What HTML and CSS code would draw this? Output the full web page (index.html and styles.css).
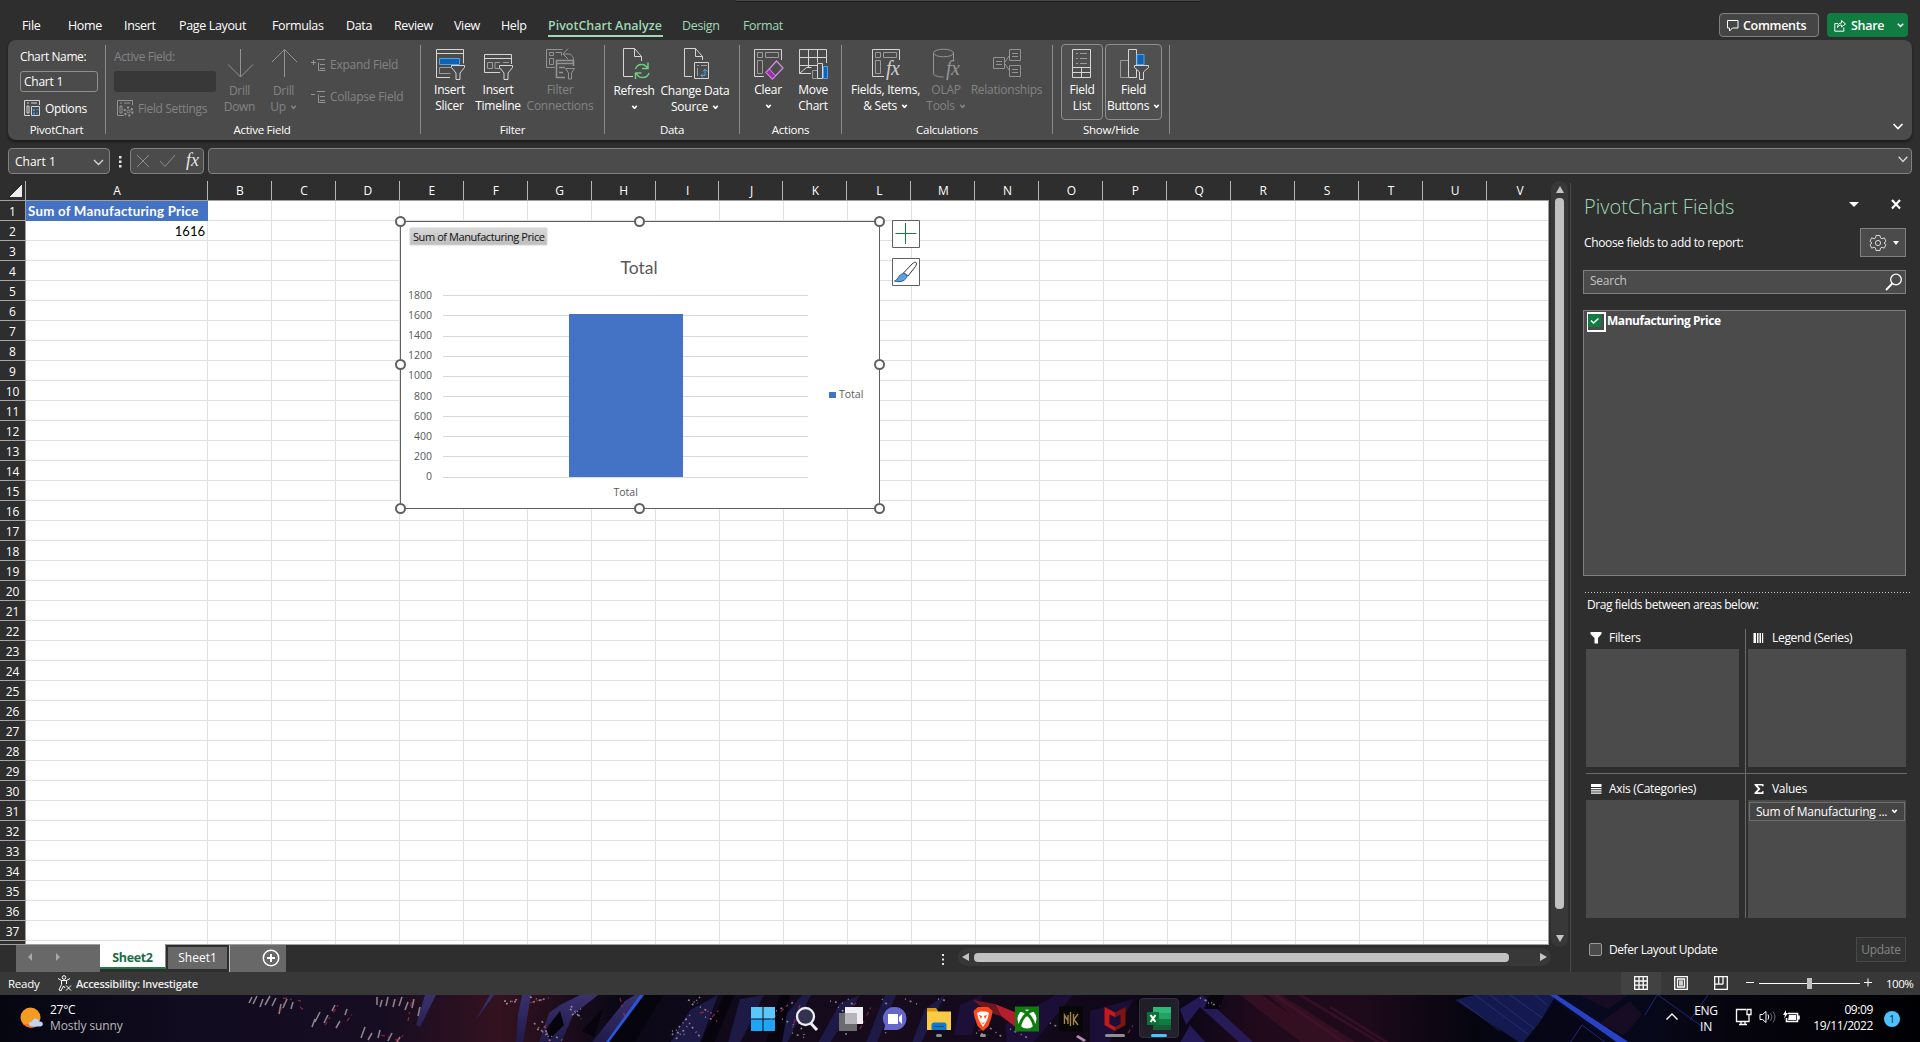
FILE: index.html
```html
<!DOCTYPE html>
<html lang="en">
<head>
<meta charset="utf-8">
<title>PivotChart</title>
<link rel="stylesheet" href="styles.css">
</head>
<body>
<div class="app">
  <header class="tabs-bar">
    <div class="title-search"></div>
    <nav class="ribbon-tabs">
      <span>File</span><span>Home</span><span>Insert</span><span>Page Layout</span><span>Formulas</span><span>Data</span><span>Review</span><span>View</span><span>Help</span><span class="green active"><b>PivotChart Analyze</b></span><span class="green">Design</span><span class="green">Format</span>
    </nav>
    <div class="top-actions">
      <div class="comments"><svg width="12" height="12" viewBox="0 0 12 12"><path d="M.5.5h10.500v7.500H5.500L2.500 11V8H.5z"/></svg><span>Comments</span></div>
      <div class="share"><svg width="12" height="13" viewBox="0 0 12 13"><path d="M4 4.500H.8v7.700h9V8.500M3.500 8.500c0-3 1.500-4.500 4-4.500V1.500L11.500 5 7.500 8V6c-2 0-3 .8-4 2.500z"/></svg><span>Share</span><svg class="sh-caret" width="7" height="5" viewBox="0 0 7 5"><path d="M.8.8l2.700 2.700L6.200.8" stroke-width="1.500"/></svg></div>
    </div>
  </header>

  <section class="ribbon">
    <div class="group g1">
      <div class="body stack">
        <span class="ln">Chart Name:</span>
        <div class="name-input">Chart 1</div>
        <div class="small-btn opt"><svg width="17" height="17" viewBox="0 0 17 17"><path d="M15.500 5V.5H.5v15H6M3 3h2M7 3h6M3 6v7M5 6v7M3 6h2M3 13h2"/><path d="M7.500 6.500h8v9h-8z"/><path d="M9 9h2v2H9zM12.500 9h2v1h-2zM9 12.500h2v2H9zM12.500 12.500h1v2h-1z" class="blue"/></svg><span>Options</span></div>
      </div>
      <div class="cap">PivotChart</div>
    </div>
    <div class="group g2">
      <div class="body row dim">
        <div class="stack af">
          <span class="ln">Active Field:</span>
          <div class="dark-input"></div>
          <div class="small-btn"><svg width="17" height="17" viewBox="0 0 17 17"><path d="M15.500 5V.5H.5v15H7M3 3h2M7 3h6M3 6v7M5 6v7M3 6h2M3 13h2"/><circle cx="11.500" cy="11.500" r="1.500"/><circle cx="11.500" cy="11.500" r="4" stroke-width="2" stroke-dasharray="2.200 2"/></svg><span>Field Settings</span></div>
        </div>
        <div class="big w44"><svg width="28" height="32" viewBox="0 0 28 32"><path d="M14.500 1v28M2 16.500l12.500 12.500L27 16.500"/></svg><span>Drill</span><span>Down</span></div>
        <div class="big w44"><svg width="28" height="32" viewBox="0 0 28 32"><path d="M14.500 29V1.500M2 14L14.500 1.500 27 14"/></svg><span>Drill</span><span>Up <i class="cv"></i></span></div>
        <div class="stack ec">
          <div><svg width="15" height="14" viewBox="0 0 15 14"><path d="M0 4.500h5M2.500 2v5M6 1.500h8M9 6.500h5M9 10.500h5M7.500 4.500v8h7"/></svg><span>Expand Field</span></div>
          <div><svg width="15" height="14" viewBox="0 0 15 14"><path d="M0 4.500h4M6 1.500h8M9 6.500h5M9 10.500h5M7.500 4.500v8h7"/></svg><span>Collapse Field</span></div>
        </div>
      </div>
      <div class="cap">Active Field</div>
    </div>
    <div class="group g3">
      <div class="body row">
        <div class="big w46"><svg width="30" height="32" viewBox="0 0 30 32"><path d="M15 29.500H1.500v-28h27v14M1.500 5.500h27"/><path d="M4.500 10.500h20v6h-20z" class="bluebox"/><path d="M16 19.500H4.500v6h11" class="gy"/><path d="M16.500 17.500h13v2L25 25v6.500h-4V25l-4.500-5.500z" class="fillbg"/></svg><span>Insert</span><span>Slicer</span></div>
        <div class="big w51"><svg width="30" height="32" viewBox="0 0 30 32"><path d="M17 24.500H1.500v-18h27V16M1.500 10.500h27"/><path d="M4.500 14.500h5v6h-5zM12 14.500h5M12 14.500v6h5M20 14.500h6" class="gy"/><path d="M16.500 17.500h13v2L25 25v6.500h-4V25l-4.500-5.500z" class="fillbg"/></svg><span>Insert</span><span>Timeline</span></div>
        <div class="big w73 dim"><svg width="30" height="32" viewBox="0 0 30 32"><path d="M10 19.500H1.500v-18h16M4.500 4.500h4v3h-4zM10.500 4.500h6v3M4.500 10.500h4v6h-4zM19 6h5c4 1 5.500 5 4 9M23 .5L18 6l5 5"/><path d="M20 29.500h-8.500v-17h17V18M11.500 15.500h17M14 19.500h6M14 24.500h4" stroke-width="1.600"/><path d="M20.500 20.500h9L26.500 25v6h-3v-6z" class="fillbg"/></svg><span>Filter</span><span>Connections</span></div>
      </div>
      <div class="cap">Filter</div>
    </div>
    <div class="group g4">
      <div class="body row">
        <div class="big w46 dn"><svg width="28" height="32" viewBox="0 0 28 32"><path d="M13 28.500H3.500V.5h11l7 8V13M14.500.5v8h7"/><path class="grn" d="M15.500 21c2-6 10-6 12-.5M28 14.500v6h-6M29 25c-2 6-10 6-12.500.5M15.500 31v-6h6"/></svg><span>Refresh</span><span><i class="cv"></i></span></div>
        <div class="big w76 dn"><svg width="28" height="32" viewBox="0 0 28 32"><path d="M11 28.500H3.500V.5h11l7 8V12M14.500.5v8h7"/><path d="M13.500 14.500h14v16h-14z"/><path d="M16 17.500h2M20 17.500h6M16.500 20v8" class="gy"/><path class="bl" d="M20 27.500h4v-6M22 23.500l2-2.500 2.500 2.500M22 25.500l-2 2 2 2"/></svg><span>Change Data</span><span>Source <i class="cv"></i></span></div>
      </div>
      <div class="cap">Data</div>
    </div>
    <div class="group g5">
      <div class="body row">
        <div class="big w45"><svg width="30" height="32" viewBox="0 0 30 32"><path d="M11 28.500H1.500V1.500h27V12"/><path class="gy" d="M4.500 4.500h5v5h-5zM12.500 4.500h13v5h-13zM4.500 12.500h5v13h-5z"/><path class="pu" d="M13 24.500L23.500 13l6.500 7-10.500 11z"/><path class="puf" d="M13 24.500l3.500-3.500 6 7-3 3z"/></svg><span>Clear</span><span><i class="cv"></i></span></div>
        <div class="big w45"><svg width="31" height="32" viewBox="0 0 31 32"><path d="M13 25.500H1.500V1.500h27V15M1.500 9.500h27M1.500 17.500h18M10.500 1.500v18M19.500 1.500v13M1.500 25.500l7-6h5"/><path class="gy" d="M14.500 22.500h5v8h-5z"/><path d="M19.500 15.500h5v15h-5z" class="fillbg"/><path d="M25.500 18.500h4v12h-4z" class="bluebox"/></svg><span>Move</span><span>Chart</span></div>
      </div>
      <div class="cap">Actions</div>
    </div>
    <div class="group g6">
      <div class="body row">
        <div class="big w74"><svg width="30" height="32" viewBox="0 0 30 32"><path d="M13 28.500H1.500V1.500h27V12"/><path class="gy" d="M4.500 4.500h5v5h-5zM12.500 4.500h13v5h-13zM4.500 12.500h5v13h-5z"/><text x="15" y="27" class="fx">fx</text></svg><span>Fields, Items,</span><span>&amp; Sets <i class="cv"></i></span></div>
        <div class="big w47 dim"><svg width="28" height="32" viewBox="0 0 28 32"><ellipse cx="11.500" cy="5" rx="10" ry="3.800"/><path d="M1.500 5v21c1 2 5 3 10 3M21.500 5v8"/><text x="14" y="27" class="fx">fx</text></svg><span>OLAP</span><span>Tools <i class="cv"></i></span></div>
        <div class="big w74 dim"><svg width="30" height="32" viewBox="0 0 30 32"><path d="M1.500 9.500h11v11h-11zM17.500 1.500h11v11h-11zM17.500 17.500h11v11h-11zM4 13.500h6M4 16.500h6M20 5.500h6M20 8.500h6M20 21.500h6M20 24.500h6M13 14l4-6M13 16l4 6"/></svg><span>Relationships</span></div>
      </div>
      <div class="cap">Calculations</div>
    </div>
    <div class="group g7">
      <div class="body row">
        <div class="big toggled w42"><svg width="22" height="32" viewBox="0 0 22 32"><path d="M1.500 1.500h18v28h-18zM1.500 19.500h18M1.500 24.500h18M10.500 19.500v10"/><path class="gy" d="M5 5.500h2M9 5.500h7M5 10.500h2M9 10.500h7M5 15.500h2M9 15.500h7"/></svg><span>Field</span><span>List</span></div>
        <div class="big toggled w57"><svg width="30" height="32" viewBox="0 0 30 32"><path class="gy" d="M9 12.500H1.500v17H9"/><path d="M9.500 1.500h8v28h-8z"/><path class="bluebox" d="M18 6.500h7v10h-7z"/><path d="M15.500 17.500h14v2L24.500 24v7.500h-4V24l-5-4.500z" class="fillbg"/></svg><span>Field</span><span>Buttons <i class="cv"></i></span></div>
      </div>
      <div class="cap">Show/Hide</div>
    </div>
    <svg class="collapse" width="12" height="8" viewBox="0 0 12 8"><path d="M1.500 1l4.500 4.500L10.500 1" stroke-width="1.600"/></svg>
  </section>

  <section class="formula-row">
    <div class="name-box"><span>Chart 1</span><svg width="11" height="7" viewBox="0 0 11 7"><path d="M1 1l4.500 4.500L10 1" stroke-width="1.300"/></svg></div>
    <svg class="dots" width="3" height="12" viewBox="0 0 3 12"><path d="M0 0h2.500v2.500H0zM0 4.500h2.500V7H0zM0 9h2.500v2.500H0z"/></svg>
    <div class="fx-box"><svg width="14" height="14" viewBox="0 0 14 14"><path d="M1 1l12 12M13 1L1 13"/></svg><svg width="17" height="14" viewBox="0 0 17 14"><path d="M1 7l5 5.500L16 1"/></svg><em>fx</em></div>
    <div class="formula-box"><svg width="10" height="7" viewBox="0 0 10 7"><path d="M.7.7L5 5.500 9.300.7" stroke-width="1.400"/></svg></div>
  </section>

  <main class="work">
    <div class="sheet-area">
      <div class="sheet-row">
        <div class="sheet">
          <div class="col-heads"><i class="corner"></i><span class="a">A</span><span>B</span><span>C</span><span>D</span><span>E</span><span>F</span><span>G</span><span>H</span><span>I</span><span>J</span><span>K</span><span>L</span><span>M</span><span>N</span><span>O</span><span>P</span><span>Q</span><span>R</span><span>S</span><span>T</span><span>U</span><span class="last">V</span></div>
          <div class="rows">
            <div class="row-heads"><span>1</span><span>2</span><span>3</span><span>4</span><span>5</span><span>6</span><span>7</span><span>8</span><span>9</span><span>10</span><span>11</span><span>12</span><span>13</span><span>14</span><span>15</span><span>16</span><span>17</span><span>18</span><span>19</span><span>20</span><span>21</span><span>22</span><span>23</span><span>24</span><span>25</span><span>26</span><span>27</span><span>28</span><span>29</span><span>30</span><span>31</span><span>32</span><span>33</span><span>34</span><span>35</span><span>36</span><span>37</span></div>
            <div class="cells">
              <div class="cell head">Sum of Manufacturing Price</div>
              <div class="cell num">1616</div>
              <div class="chart">
                <svg width="494" height="302" viewBox="393 214 494 302">
                  <defs><linearGradient id="fb" x2="0" y2="1"><stop offset="0" stop-color="#d9d9d9"/><stop offset="1" stop-color="#bdbdbd"/></linearGradient></defs>
                  <path d="M400.500 221.500h479v287h-479z" fill="#fff" stroke="#606060"/>
                  <path d="M410 228h137v17H410z" fill="url(#fb)"/>
                  <text x="413" y="241" class="fbtn">Sum of Manufacturing Price</text>
                  <text x="639" y="274" class="ct">Total</text>
                  <path stroke="#d9d9d9" d="M443 295.500h365M443 315.500h365M443 336.500h365M443 356.500h365M443 376.500h365M443 396.500h365M443 416.500h365M443 436.500h365M443 456.500h365M443 477.500h365"/>
                  <path d="M569 314h114v163H569z" fill="#4472c4" stroke="none"/>
                  <g class="ax"><text x="432" y="299">1800</text><text x="432" y="319">1600</text><text x="432" y="339">1400</text><text x="432" y="359">1200</text><text x="432" y="379">1000</text><text x="432" y="400">800</text><text x="432" y="420">600</text><text x="432" y="440">400</text><text x="432" y="460">200</text><text x="432" y="480">0</text></g>
                  <text x="613.500" y="496" class="lb">Total</text>
                  <path d="M829 392h7v6h-7z" fill="#4472c4" stroke="none"/><text x="839" y="398" class="lb">Total</text>
                  <g fill="#fff" stroke="#606060" stroke-width="2"><circle cx="400.500" cy="221.500" r="4.500"/><circle cx="639.500" cy="221.500" r="4.500"/><circle cx="879.500" cy="221.500" r="4.500"/><circle cx="400.500" cy="364.500" r="4.500"/><circle cx="879.500" cy="364.500" r="4.500"/><circle cx="400.500" cy="508.500" r="4.500"/><circle cx="639.500" cy="508.500" r="4.500"/><circle cx="879.500" cy="508.500" r="4.500"/></g>
                </svg>
                <div class="side-btns">
                  <svg width="28" height="28" viewBox="0 0 28 28"><path d="M.5.5h27v27H.5z" fill="#fff" stroke="#606060"/><path d="M3.500 13.500h21M13.500 3v21" stroke="#1e7b3c" fill="none"/></svg>
                  <svg width="28" height="28" viewBox="0 0 28 28"><path d="M.5.5h27v27H.5z" fill="#fff" stroke="#606060"/><path d="M24 4.500c1 .5.5 2-.5 4L16 18l-4.500-3L20 6c2-1.500 3-2.200 4-1.500z" fill="#fff" stroke="#333"/><path d="M11.500 15.500c3 0 4 2 3 4-2 4-7 5-12 3.500 4-1 3.500-6.500 9-7.500z" fill="#5ba3dc" stroke="#2b579a"/></svg>
                </div>
              </div>
            </div>
          </div>
        </div>
        <div class="vscroll"><i class="up"></i><i class="thumb"></i><i class="down"></i></div>
      </div>
      <div class="sheet-tabs">
        <div class="nav"><i class="la"></i><i class="ra"></i></div>
        <div class="tab on">Sheet2</div>
        <div class="tab off">Sheet1</div>
        <div class="add"><svg width="18" height="18" viewBox="0 0 18 18"><circle cx="9" cy="9" r="7.700"/><path d="M9 5v8M5 9h8" stroke-width="2"/></svg></div>
        <svg class="dots hs" width="3" height="12" viewBox="0 0 3 12"><path d="M0 0h2v2H0zM0 4.500h2v2H0zM0 9h2v2H0z"/></svg>
        <div class="hscroll"><i class="la"></i><i class="thumb"></i><i class="ra"></i></div>
      </div>
    </div>

    <aside class="pane">
      <div class="pane-title"><h2>PivotChart Fields</h2><i class="tri"></i><svg width="11" height="11" viewBox="0 0 11 11"><path d="M1 1l8 8.500M9 1L1 9.500" stroke="#fff" stroke-width="2.200"/></svg></div>
      <div class="choose"><span>Choose fields to add to report:</span><div class="gear"><svg width="18" height="18" viewBox="0 0 18 18"><path d="M7 1.500h4l.5 2.500 1.500.8 2.300-1 1.700 3.500-2 1.700 2 1.700-1.700 3.500-2.300-1-1.500.8-.5 2.500H7L6.500 14 5 13.200l-2.300 1L1 10.700 3 9 1 7.300l1.700-3.500 2.300 1L6.500 4z"/><circle cx="9" cy="9" r="2.600"/></svg><i class="tri sm"></i></div></div>
      <div class="search"><span>Search</span><svg width="18" height="18" viewBox="0 0 18 18"><circle cx="12" cy="6.500" r="5.300"/><path d="M8.300 10.500L2 17" stroke-width="1.800"/></svg></div>
      <div class="fields"><i class="chk"><svg width="13" height="13" viewBox="0 0 13 13"><path d="M3 6.500l2.500 2.500 5-4.500" stroke="#fff" stroke-width="1.500" fill="none"/></svg></i><b>Manufacturing Price</b></div>
      <div class="dotline"></div>
      <div class="drag">Drag fields between areas below:</div>
      <div class="areas">
        <div class="area"><h3><svg width="12" height="12" viewBox="0 0 12 12"><path d="M.5 0h11v2L8 6v5.500H4.500V6L.5 2z"/></svg>Filters</h3><div class="drop"></div></div>
        <div class="area r"><h3><svg width="12" height="12" viewBox="0 0 12 12"><path d="M.5 1h2.500v10H.5zM4 1h1.500v10H4zM6.500 1H8v10H6.500zM9 1h1.200v10H9z"/></svg>Legend (Series)</h3><div class="drop"></div></div>
        <div class="area b"><h3><svg width="12" height="12" viewBox="0 0 12 12"><path d="M1 1h10.500v3H1zM1 5h10.500v1.200H1zM1 7.300h10.500v1.200H1zM1 9.500h10.500v1.200H1z"/></svg>Axis (Categories)</h3><div class="drop"></div></div>
        <div class="area r b"><h3><svg width="12" height="12" viewBox="0 0 12 12"><path d="M1.500 1h9v2.500h-1L9 2.500H4.500L7.500 6l-3.200 3.300H9l.5-1.300h1v3h-9V9.700L5 6 1.500 2z"/></svg>Values</h3><div class="drop"><div class="item"><span>Sum of Manufacturing ...</span><i class="cv"></i></div></div></div>
      </div>
      <div class="defer"><i></i><span>Defer Layout Update</span><div class="update">Update</div></div>
    </aside>
  </main>

  <footer class="status">
    <span class="ready">Ready</span>
    <svg class="acc" width="15" height="17" viewBox="0 0 15 17"><circle cx="7" cy="2.500" r="1.800"/><path d="M1 3.500l3.500 2v4L2 15l2 .8L6.500 11 8 13M13 3.500L9.500 5.500V9M4.500 5.500h5M9 10.500l5 5M14 10.500l-5 5"/></svg>
    <span class="acct">Accessibility: Investigate</span>
    <div class="views">
      <i class="v on"><svg width="14" height="14" viewBox="0 0 14 14"><path d="M.7.700h12.600v12.600H.7zM.7 5h12.600M.7 9.200h12.600M5 .7v12.600M9.200.7v12.600" stroke-width="1.300"/></svg></i>
      <i class="v"><svg width="14" height="14" viewBox="0 0 14 14"><path d="M.7.700h12.600v12.600H.7zM3.500 3h7v8h-7zM5 5.200h4M5 7h4M5 8.800h4" stroke-width="1.300"/></svg></i>
      <i class="v"><svg width="14" height="14" viewBox="0 0 14 14"><path d="M.7.700h12.600v12.600H.7zM4.700.7v7.500M9 .7v7.500M.7 8.200H9" stroke-width="1.300"/></svg></i>
    </div>
    <svg class="zoomer" width="128" height="12" viewBox="0 0 128 12"><path d="M1 5.500h8M14 6.500h101M119 5.500h8M123 1.500v8"/><path d="M62 1h5v11h-5z" fill="#c0c0c0" stroke="none"/></svg>
    <span class="pct">100%</span>
  </footer>

  <footer class="taskbar">
    <svg class="wall" width="1920" height="47" viewBox="0 0 1920 47">
      <defs>
        <linearGradient id="w1"><stop offset="0" stop-color="#060611"/><stop offset=".1" stop-color="#110c20"/><stop offset=".2" stop-color="#170d22"/><stop offset=".26" stop-color="#34121f"/><stop offset=".32" stop-color="#0b0818"/><stop offset=".46" stop-color="#170b1c"/><stop offset=".62" stop-color="#0d0718"/><stop offset=".655" stop-color="#200a1c"/><stop offset=".71" stop-color="#1e0a1a"/><stop offset=".77" stop-color="#04050f"/><stop offset=".82" stop-color="#070a22"/><stop offset=".9" stop-color="#06050f"/><stop offset="1" stop-color="#000003"/></linearGradient>
        <linearGradient id="w2" x2="0" y2="1"><stop offset="0" stop-color="#39306e"/><stop offset="1" stop-color="#201b49"/></linearGradient>
      </defs>
      <path fill="url(#w1)" d="M0 0h1920v48H0z"/>
      <path fill="url(#w2)" d="M425 0h11L420 32l-4-2zM490 0h4L475 26zM522 0h9l-8 48h-7l2-28zM560 10l20-10h18l-25 20-12 28h-22l10-30zM625 6l10-6h6l-34 47h-15zM684 36l16-18-6 26z"/>
      <path fill="#1d1a45" d="M690 15l28-15-18 48h-30zM740 4l24-4-24 48h-12zM786 20l16-20h9l-24 48h-16zM840 8l20-8-30 48h-12zM885 0h11l-19 48h-11zM925 14l20-14-24 48h-9z"/>
      <path fill="#211345" opacity=".7" d="M960 10l22-10-10 40h-18zM1005 30l50-30h18l-40 48h-26zM1090 16l44-12-25 44h-19z"/>
      <path fill="#2b1f66" opacity=".8" d="M1180 14l22-14 52 48h-14l-40-36-14 18zM1190 30l16 18h-26z"/>
      <path fill="#07040e" d="M700 48l24-48h10l-20 48zM766 48l14-48h10l-8 48zM546 34l14-18 4 14-14 14zM582 36l22-24-10 30zM1136 6l40-4-30 40zM1210 0h14l-4 14h-16z"/>
      <path fill="#2b55d8" d="M640 0h4L609 47h-3z"/>
      <path fill="#06040c" d="M645 0h18l-28 47h-25z"/>
      <path fill="#3d1225" d="M1240 0h22l70 48h-30zM1268 0h14l75 48h-34z" opacity=".65"/>
      <path stroke="#4b1731" opacity=".45" stroke-width="3" d="M1275 0l70 48M1300 0l80 48M1330 12l58 36"/>
      <path fill="#141a50" d="M1455 5l19-5h82l-28 47h-9z"/>
      <path stroke="#33499e" opacity=".45" d="M1475 0l54 40M1490 0l45 34M1510 0l34 24M1535 0l12 10M1460 6l40 30"/>
      <path fill="#060616" d="M1556 7l52 41h-85z"/>
      <path fill="#2941c4" d="M1550 0h7l73 48h-12z"/>
      <path stroke="#20277a" fill="none" d="M1570 48l12-18 24 18M1645 20l12-20M1658 0l45 32M1690 25l18-25"/>
      <path fill="#2a0f2c" opacity=".5" d="M1580 0h48l-20 14zM1600 28l30-22 12 14-18 20z"/>
      <g class="lights">
        <path d="M252 2l-3 6M257 1l-4 8M263 4l-3 8M270 1l-5 9M276 3l-4 8M281 9l-2 10M287 4l-4 9M293 7l-2 7M315 24l-3 8M320 17l-5 10M328 20l-4 8M335 10l-3 6M340 26l-4 7M347 14l-2 6M377 2v8M382 5l-2 7M388 2l-2 9M395 4l-2 8M402 2l-3 9M408 7l-3 8M414 4l-2 9M420 12l-2 9M365 32l-4 11M372 38l-4 7M380 35l-2 8M392 38l-4 8M400 42l-3 5"/>
        <path stroke-dasharray="2 4 1 3" d="M504 6l15 1M506 9l12-5M530 2l14 4M533 7l16-4M570 14l11 8M572 20l9-6M571 11l10 13M534 28l14 14M537 34l16 8M542 26l8 20M556 42l8 4M672 40l18-20M676 44l14-16M688 5l10 3M692 10l8-8M692 32l8 10"/>
        <path stroke-dasharray="1 4 2 5" d="M700 12l15 8M705 22l12 4M672 36l14 4M776 16l20-10M782 24l12 6M792 38l16 6M799 28l6 14M830 6l16 3M838 12l10 8M848 4l10 12M856 24l-12 18M882 4l9 10M890 26l-6 16M905 4l12 5M938 4l10 2M976 38l12 2M986 30l16 12M1010 34l18 9M1050 28l8 4M1200 3l12 5M1208 8l12 3"/>
      </g>
      <path stroke="#b33042" opacity=".7" stroke-width="1.300" stroke-dasharray="4 3 2 6" d="M283 3l18 3M280 16l7-14M300 12l5 4M325 30l13-20M347 26l5-6M381 40l20 6M408 26l4-22M396 46l8-6M530 8l12-4M545 30l4 16M620 3l5 20M700 18l14-3M712 22l8-8M758 36l29-25M800 10l-8 24M842 20l14-12M860 34l12-24M902 32l6-14M978 36l12-6M1128 38l8-12"/>
      <path fill="#b3202c" d="M995 9l22 9v15l-16-12z"/><path fill="#701822" d="M973 5l22 4 6 12-14-4z"/><path fill="#b78bae" d="M1078 40l8 5-2 2-8-5z"/>
    </svg>
    <div class="weather"><svg width="24" height="24" viewBox="0 0 24 24"><circle cx="10.500" cy="10.500" r="10" fill="#f59a23"/><path d="M4 17c4 5 12 5 15 0z" fill="#f0701a"/><path d="M12 19.500c-4 0-4-5 0-5 1-4 6-4 7 0 5-.5 5 5 1 5z" fill="#bcd4f5"/></svg><div><span>27°C</span><span class="sub">Mostly sunny</span></div></div>
    <div class="apps">
      <i><svg viewBox="0 0 24 24"><path fill="#5cc7fa" d="M0 0h11.500v11.500H0zM12.500 0H24v11.500H12.500z"/><path fill="#1fa5f5" d="M0 12.500h11.500V24H0zM12.500 12.500H24V24H12.500z"/></svg></i>
      <i><svg viewBox="0 0 24 24"><circle cx="10.500" cy="9.500" r="8.500" fill="#33334f" stroke="#eceef4" stroke-width="2.300"/><path d="M16 16.500l6 6.500" stroke="#eceef4" stroke-width="3"/></svg></i>
      <i><svg viewBox="0 0 24 24"><path fill="#6c6c70" d="M0 6h18v18H0z"/><path fill="#f0f0f2" d="M6 0h18v17H6z"/><path fill="#b6b6ba" d="M6 6h12v11H6z"/></svg></i>
      <i><svg viewBox="0 0 24 24"><path fill="#6667ca" d="M12 0a11.500 11.500 0 1 1 0 23H1l1-5A11.500 11.500 0 0 1 12 0z"/><path fill="#fff" d="M5 7h10v10H5z"/><path fill="#fff" d="M16 10l3-3v10l-3-3z"/></svg></i>
      <i><svg viewBox="0 0 24 24"><path fill="#d99a12" d="M0 1h9l2 3v5H0z"/><path fill="#fccb45" d="M0 4.500h24V23H0z"/><path fill="#117ac9" d="M4.500 23v-5q0-2.500 2.500-2.500h10q2.500 0 2.500 2.500v5z"/><path stroke="#0a4c93" d="M7 19.500h10"/></svg><u></u></i>
      <i><svg viewBox="0 0 24 24"><path fill="#fb4a1e" d="M7 0h10l4.500 4-1 6-3 9-5.500 5-5.500-5-3-9-1-6z"/><path fill="#fff" d="M6 6l3-1.500h6L18 6l-1.500 6-2 4-2.500 4-2.500-4-2-4z"/><path fill="#fb4a1e" d="M8 8l3 1-1 3zM16 8l-3 1 1 3zM10 14.500l2 1.500 2-1.500-2 3z"/></svg><u></u></i>
      <i><svg viewBox="0 0 24 24"><path fill="#107c10" d="M0-.5h24v25H0z"/><circle cx="12" cy="12" r="9.500" fill="#fff"/><path fill="none" stroke="#107c10" stroke-width="3" d="M4.500 20C6 13 9 9 12 7c3 2 6 6 7.500 13M6 3.500c3 0 5 2 6 3.500 1-1.500 3-3.500 6-3.500"/></svg></i>
      <i><svg viewBox="0 0 24 24"><path fill="#080705" d="M0-.5h24v25H0z"/><path stroke="#a3834c" stroke-width="1.400" fill="none" d="M5.500 17V8l3.500 6M9 17V8M11.500 5v14M14.500 7v11M19 7l-4 5.500 4 5.500"/></svg></i>
      <i><svg viewBox="0 0 24 24"><path fill="#c4191d" d="M1.500 0L12 5.500V10L6.500 7.500V17l5.500 3v4L1.500 18z"/><path fill="#7f1512" d="M22.500 0L12 5.500V10l5.500-2.500V17L12 20v4l10.500-6z"/></svg><u class="wide"></u></i>
      <i class="cur"><svg viewBox="0 0 24 24"><path fill="#2fb879" d="M6 0h18v6H6z"/><path fill="#21a366" d="M6 6h18v6H6z"/><path fill="#107c41" d="M6 12h18v6H6z"/><path fill="#185c37" d="M6 18h18v5H6z"/><path fill="#0d7038" d="M0 5h12v13H0z"/><path stroke="#fff" stroke-width="2" d="M3.500 8l5 7M8.500 8l-5 7"/></svg><u class="act"></u></i>
    </div>
    <div class="tray">
      <svg class="t1" width="14" height="9" viewBox="0 0 14 9"><path d="M1.500 7.500L7 2l5.500 5.500" stroke-width="1.400"/></svg>
      <div class="lang"><span>ENG</span><span>IN</span></div>
      <svg class="t2" width="18" height="18" viewBox="0 0 18 18"><path d="M11 1.500H1.500v12H14V9M4 16.500h8M6 14v2M10 14v2M12 1.500h4v5h-4zM14 7v4" stroke-width="1.300"/></svg>
      <svg class="t3" width="18" height="14" viewBox="0 0 18 14"><path d="M1 4.500h2.500L7 1.500v11L3.500 9.500H1zM9 4.500q1.500 2.500 0 5"/><path opacity=".4" d="M11.500 3q3 4 0 8M14 1.500q4 5.500 0 11"/></svg>
      <svg class="t4" width="18" height="14" viewBox="0 0 18 14"><path d="M5 3.500h9.500v8h-11V8M16 5.500v4" stroke-width="1.600"/><path fill="#fff" stroke="none" d="M6 5h7v5H5zM3 0L0 5h2L1 9l4-6H3z"/></svg>
      <div class="clock"><span>09:09</span><span>19/11/2022</span></div>
      <div class="badge">1</div>
    </div>
  </footer>
</div>
</body>
</html>
```
FILE: styles.css
```css
* { box-sizing: border-box; }
body {
  margin: 0;
  width: 1920px;
  height: 1042px;
  overflow: hidden;
  background: #2e2e2e;
  color: #fff;
  font: 12px/16px "Open Sans", "Noto Sans", sans-serif;
  letter-spacing: -0.25px;
  white-space: nowrap;
}
i, em { font-style: normal; }
svg { display: block; flex: none; fill: none; stroke: #d6d6d6; overflow: visible; }
.app { display: flex; flex-direction: column; height: 1042px; }

/* Tabs */
.tabs-bar { position: relative; height: 40px; display: flex; justify-content: space-between; background: #2e2e2e; }
.title-search { position: absolute; left: 735px; top: 0; width: 466px; height: 2px; background: #474747; border-bottom: 1px solid #1c1c1c; border-radius: 0 0 4px 4px; }
.ribbon-tabs {
  display: grid;
  grid-template-columns: 46px 56px 55px 93px 74px 48px 60px 47px 47px 134px 61px 60px;
  margin-left: 22px;
  padding-top: 17px;
  font-size: 12.500px;
  line-height: 17px;
  letter-spacing: -0.35px;
}
.ribbon-tabs .green { color: #9fd8b7; }
.ribbon-tabs b { display: inline-block; width: 115px; height: 20px; font-weight: 600; border-bottom: 2px solid #9fd8b7; letter-spacing: 0; }
.top-actions { display: flex; gap: 8px; padding: 13px 12px 0 0; }
.top-actions svg { stroke: #fff; }
.comments, .share { display: flex; align-items: center; height: 24px; border-radius: 4px; font-weight: 600; font-size: 12.500px; letter-spacing: -0.3px; padding-top: 1px; }
.comments { width: 100px; padding-left: 7px; gap: 4px; background: #454545; border: 1px solid #808080; }
.share { width: 81px; padding-left: 7px; gap: 5px; background: #107c41; }
.sh-caret { margin-left: 8px; }

/* Ribbon */
.ribbon { display: flex; width: 1904px; height: 100px; margin-left: 8px; background: #4b4b4b; border-radius: 8px; box-shadow: 0 2px 3px rgba(0,0,0,.45); }
.group { position: relative; display: flex; flex-direction: column; height: 100px; padding-top: 8px; }
.group::after { content: ""; position: absolute; right: 0; top: 5px; width: 1px; height: 89px; background: #8a8a8a; }
.g1 { width: 98px; } .g2 { width: 315px; } .g3 { width: 184px; } .g4 { width: 135px; } .g5 { width: 102px; } .g6 { width: 211px; } .g7 { width: 117px; }
.body { height: 74px; }
.row { display: flex; padding-left: 6px; }
.g6 .row { padding-left: 7px; }
.g7 .row { padding-left: 8px; gap: 2px; }
.stack { display: flex; flex-direction: column; }
.g1 .stack { padding-left: 12px; }
.ln { height: 23px; padding-top: 1px; letter-spacing: -0.4px; }
.name-input { width: 78px; height: 21px; padding: 2px 3px; border: 1px solid #8f8f8f; border-radius: 3px; line-height: 16px; }
.small-btn { display: flex; align-items: center; gap: 4px; margin: 8px 0 0 4px; height: 17px; letter-spacing: -.35px; }
.small-btn .blue { fill: #2f9be8; stroke: none; }
.cap { text-align: center; line-height: 16px; font-size: 11.500px; padding-right: 1px; }
.af { width: 105px; padding-left: 1px; }
.af .dark-input { width: 102px; height: 21px; background: #383838; border-radius: 3px; }
.af .small-btn { margin-left: 3px; }
.dim { color: #838383; }
.dim svg { stroke: #939393; }
.g2 .row { padding-left: 7px; }
.g2 .cap { padding-right: 3px; }
.big { display: flex; flex-direction: column; align-items: center; height: 75px; padding-right: 1px; }
.big svg { height: 32px; margin-bottom: 2px; }
.big.dn { padding-right: 0; }
.big.dn svg { margin-bottom: 3px; }
.w42 { width: 42px; } .w44 { width: 44px; } .w45 { width: 45px; } .w46 { width: 46px; } .w47 { width: 47px; } .w51 { width: 51px; } .w57 { width: 57px; } .w73 { width: 73px; } .w74 { width: 74px; } .w76 { width: 76px; }
.g2 .big { letter-spacing: -0.3px; }
.g2 .big svg { margin-bottom: 3px; }
.ec { padding: 9px 0 0 5px; gap: 16px; }
.ec div { display: flex; align-items: center; gap: 4px; height: 16px; }
.cv { display: inline-block; width: 5px; height: 5px; margin: 0 1px 3px 2px; border: solid currentColor; border-width: 0 2px 2px 0; transform: rotate(45deg) scale(.8); vertical-align: middle; }
.big .gy { stroke: #9b9b9b; }
.bluebox { fill: #0f62b4; stroke: #4da3e8; }
.fillbg { fill: #4b4b4b; }
.grn { stroke: #6ccb7f; stroke-width: 1.5; }
.bl { stroke: #4da3e8; }
.pu { fill: #4b4b4b; stroke: #cf8be0; stroke-width: 1.3; }
.puf { fill: #9b30ac; stroke: #cf8be0; }
.fx { font: italic 20px "Liberation Serif", serif; fill: #cfcfcf; stroke: none; letter-spacing: -.5px; }
.dim .fx { fill: #959595; }
.toggled { height: 76px; margin-top: -4px; padding: 3px 0 0; border: 1px solid #8f8f8f; border-radius: 4px; background: #505050; }
.collapse { margin: 83px 0 0 722px; }
.collapse path { stroke: #fff; }

/* Formula bar */
.formula-row { display: flex; height: 41px; padding: 8px 8px 7px; }
.formula-row > div { height: 26px; border: 1px solid #808080; border-radius: 4px; background: #4b4b4b; display: flex; align-items: center; }
.name-box { width: 102px; padding: 2px 5px 0 6px; justify-content: space-between; letter-spacing: 0; }
.dots { fill: #e6e6e6; stroke: none; margin: 8px 8px 0 9px; }
.fx-box { width: 74px; padding-left: 5px; gap: 9px; }
.fx-box svg { stroke: #8c8c8c; }
.fx-box em { font: italic 18px/20px "Liberation Serif", serif; color: #e6e6e6; letter-spacing: 0; margin: -3px 0 0 1px; }
.formula-box { width: 1704px; margin-left: 4px; justify-content: flex-end; padding: 0 3px 4px 0; }

/* Sheet */
.work { display: flex; height: 791px; }
.sheet-area { width: 1570px; }
.sheet-row { display: flex; height: 764px; }
.sheet { width: 1549px; }
.col-heads { display: flex; height: 20px; background: #2e2e2e; border-bottom: 1px solid #a0a0a0; }
.col-heads span { width: 64px; padding-left: 1px; text-align: center; line-height: 19px; border-right: 1px solid #b5b5b5; }
.col-heads .a { width: 182px; }
.col-heads .last { width: 62px; border: 0; padding-left: 4px; }
.corner { width: 26px; border-right: 1px solid #b5b5b5; background: linear-gradient(135deg, transparent 50%, #ededed 50%) no-repeat 10px 4px / 12px 12px; }
.rows { display: flex; height: 744px; overflow: hidden; border-bottom: 1px solid #a0a0a0; }
.row-heads { width: 26px; border-right: 1px solid #a0a0a0; background: #2e2e2e; }
.row-heads span { display: block; height: 20px; text-align: center; line-height: 21px; border-bottom: 1px solid #a8a8a8; letter-spacing: 0; }
.cells {
  position: relative;
  width: 1523px;
  border-right: 1px solid #a0a0a0;
  background:
    linear-gradient(#e0e0e0, #e0e0e0) no-repeat 181px 0 / 1px 100%,
    repeating-linear-gradient(90deg, transparent 0 63px, #e0e0e0 63px 64px) no-repeat 182px 0 / 1341px 100%,
    repeating-linear-gradient(transparent 0 19px, #e0e0e0 19px 20px),
    #fff;
}
.cell { width: 182px; height: 20px; padding: 0 3px 0 2px; line-height: 21px; font-family: Lato, "Open Sans", sans-serif; font-size: 13px; letter-spacing: 0; color: #000; }
.cell.head { background: #4472c4; color: #fff; font-weight: 700; font-size: 13.300px; letter-spacing: 0.23px; }
.cell.num { text-align: right; }
.chart { position: absolute; left: 367px; top: 13px; display: flex; }
.chart text { stroke: none; fill: #595959; font-family: "Open Sans", sans-serif; }
.chart .fbtn { fill: #111; font-size: 11px; letter-spacing: -0.42px; }
.chart .ct { font: 17.500px Lato, sans-serif; text-anchor: middle; letter-spacing: 0; }
.chart .ax text { font-size: 10.500px; text-anchor: end; letter-spacing: 0; }
.chart .lb { font-size: 10.500px; letter-spacing: 0; }
.side-btns { display: flex; flex-direction: column; gap: 10px; padding: 6px 0 0 5px; }

.vscroll { display: flex; flex-direction: column; align-items: center; width: 17px; height: 766px; margin-left: 2px; background: #383838; border-radius: 9px; }
.vscroll .up { border: 4.500px solid transparent; border-bottom: 7px solid #c4c4c4; border-top: 0; margin-top: 5px; }
.vscroll .thumb { width: 9px; height: 711px; margin-top: 5px; border-radius: 4px; background: #c2c2c2; }
.vscroll .down { border: 4.500px solid transparent; border-top: 7px solid #c4c4c4; border-bottom: 0; margin-top: 26px; }

.sheet-tabs { display: flex; height: 27px; padding-left: 16px; }
.la, .ra { width: 0; height: 0; border: 4px solid transparent; }
.la { border-right: 4px solid #a8a8a8; border-left: 0; }
.ra { border-left: 4px solid #a8a8a8; border-right: 0; }
.nav { width: 84px; background: #686868; display: flex; align-items: center; gap: 24px; padding: 0 0 3px 12px; }
.tab { text-align: center; }
.tab.on { width: 66px; height: 25px; margin-top: -1px; background: #fff; color: #1b6e42; font-weight: 700; border-bottom: 2px solid #1f7a48; border-right: 1px solid #888; font-size: 12.500px; letter-spacing: -.35px; line-height: 27px; }
.tab.off { width: 59px; height: 22px; margin: 2px 2px 0 2px; line-height: 21px; background: #686868; letter-spacing: 0; }
.add { width: 57px; padding: 4px 0 0 32px; background: #686868; border-left: 1px solid #c0c0c0; }
.add svg { stroke: #fff; stroke-width: 1.5; }
.dots.hs { margin: 9px 8px 0 656px; }
.hscroll { display: flex; align-items: center; width: 593px; height: 18px; margin: 3px 0 0 5px; padding-left: 4px; background: #383838; border-radius: 9px; }
.hscroll .la, .hscroll .ra { border-width: 4.500px 7px; }
.hscroll .la { border-left: 0; border-right-color: #c4c4c4; }
.hscroll .ra { border-right: 0; border-left-color: #c4c4c4; margin-left: 31px; }
.hscroll .thumb { width: 535px; height: 9px; margin-left: 5px; border-radius: 4px; background: #c2c2c2; }

/* Pane */
.pane { width: 350px; height: 789px; margin-top: 2px; padding-left: 12px; border-left: 1px solid #484848; }
.pane-title { display: flex; height: 36px; padding-left: 1px; }
.pane-title h2 { width: 265px; margin: 9px 0 0; font: 300 20px/30px "Open Sans", sans-serif; letter-spacing: 0.05px; color: #9fd8b7; }
.pane-title svg { margin: 16px 0 0 32px; }
.tri { width: 0; height: 0; border: 5px solid transparent; border-top-color: #fff; border-bottom: 0; margin-top: 19px; }
.tri.sm { border-width: 4px 3.500px 0; margin: 0; }
.choose { display: flex; justify-content: space-between; align-items: flex-start; width: 323px; height: 51px; padding: 9px 0 0 1px; }
.choose > span { margin-top: 7px; letter-spacing: -0.35px; }
.gear { width: 46px; height: 29px; margin: 0; display: flex; align-items: center; gap: 6px; padding-left: 8px; background: #4b4b4b; border: 1px solid #808080; }
.search { display: flex; align-items: center; justify-content: space-between; width: 323px; height: 24px; padding: 0 3px 0 6px; background: #4b4b4b; border: 1px solid #808080; color: #c4c4c4; }
.search span { margin-top: -2px; }
.search svg { stroke: #fff; stroke-width: 1.3; }
.fields { display: flex; width: 323px; height: 266px; margin-top: 16px; padding: 1px 0 0 3px; background: #4b4b4b; border: 1px solid #808080; }
.chk { width: 19px; height: 20px; border: 2px solid #fff; border-left-width: 1px; }
.chk svg { background: #107c41; }
.fields b { margin: 1px 0 0 1px; letter-spacing: -.46px; }
.dotline { width: 325px; height: 1px; margin: 16px 0 0 2px; background: repeating-linear-gradient(90deg, #ccc 0 1px, transparent 1px 3px); }
.drag { margin: 4px 0 0 4px; height: 32px; letter-spacing: -.43px; }
.areas { display: grid; grid-template-columns: 160px 161px; grid-template-rows: 144px 145px; margin-left: 3px; width: 320px; }
.area h3 { display: flex; gap: 7px; align-items: center; height: 20px; padding: 0 0 2px 4px; margin: 0; font: inherit; letter-spacing: -.3px; }
.area h3 svg { fill: #fff; stroke: none; margin-top: -1px; }
.area { border-right: 1px solid #6a6a6a; }
.area .drop { width: 153px; height: 118px; background: #4b4b4b; }
.area.r { border-right: 0; padding-left: 2px; }
.area.r h3 { padding-left: 5px; }
.area.r .drop { width: 158px; padding: 2px 1px; }
.area.b { border-top: 1px solid #6a6a6a; padding-top: 6px; }
.item { display: flex; align-items: center; height: 19px; padding: 0 6px; border: 1px solid #6e6e6e; background: #444; justify-content: space-between; }
.item .cv { margin-top: 1px; }
.defer { display: flex; width: 323px; height: 25px; margin-top: 19px; padding-left: 6px; align-items: center; }
.defer i { width: 13px; height: 13px; border: 1px solid #999; border-radius: 2px; background: #4b4b4b; }
.defer span { margin-left: 7px; letter-spacing: -.42px; }
.update { margin-left: auto; width: 50px; height: 25px; text-align: center; line-height: 24px; color: #838383; border: 1px solid #484848; background: #333; }

/* Status bar */
.status { display: flex; height: 23px; padding-left: 8px; background: #383838; font-size: 11.500px; }
.status svg { stroke: #fff; }
.ready { width: 49px; line-height: 24px; }
.acc { margin-top: 3px; }
.acct { width: 1548px; margin-left: 4px; line-height: 23px; font-weight: 600; font-size: 11px; letter-spacing: -.28px; color: #ececec; }
.views { display: flex; margin-left: -3px; height: 22px; }
.v { width: 40px; display: flex; align-items: center; justify-content: center; }
.v.on { background: #424242; }
.zoomer { margin: 5px 0 0 4px; }
.pct { margin-left: 13px; line-height: 23px; letter-spacing: -.5px; }

/* Taskbar */
.taskbar { position: relative; height: 47px; display: flex; justify-content: space-between; }
.wall { position: absolute; left: 0; top: 0; stroke: none; overflow: hidden; }
.lights { stroke: #cbbec4; stroke-width: 1.600; opacity: .65; }
.weather { position: relative; display: flex; gap: 6px; width: 741px; padding: 7px 0 0 20px; }
.weather svg { margin-top: 5px; stroke: none; }
.weather span { display: block; }
.weather .sub { color: #b9b9bd; letter-spacing: -.1px; }
.apps { position: relative; display: flex; width: 440px; }
.apps i { width: 44px; display: flex; flex-direction: column; align-items: center; padding-top: 12px; }
.apps svg { width: 24px; height: 24px; stroke: none; }
.apps u { width: 6px; height: 3px; margin-top: 3px; border-radius: 2px; background: #8f8f92; }
.apps .wide { width: 20px; }
.apps .act { width: 16px; background: #4cc2ff; }
.apps .cur { width: 40px; height: 40px; margin: 3px 2px 0; padding-top: 8px; border-radius: 4px; background: rgba(50,50,56,.6); border: 1px solid #303038; }
.tray { position: relative; display: flex; width: 739px; padding: 7px 0 0 484px; }
.tray svg { stroke: #fff; }
.tray span { display: block; }
.t1 { margin-top: 10px; }
.lang { width: 40px; margin: 1px 0 0 7px; text-align: center; }
.t2 { margin: 6px 0 0 9px; }
.t3 { margin: 8px 0 0 6px; }
.t4 { margin: 8px 0 0 6px; }
.clock { width: 72px; text-align: right; letter-spacing: -.4px; }
.badge { width: 16px; height: 16px; margin: 9px 0 0 11px; border-radius: 50%; background: #4cc2ff; color: #123; text-align: center; font-size: 10px; line-height: 16px; }
```
